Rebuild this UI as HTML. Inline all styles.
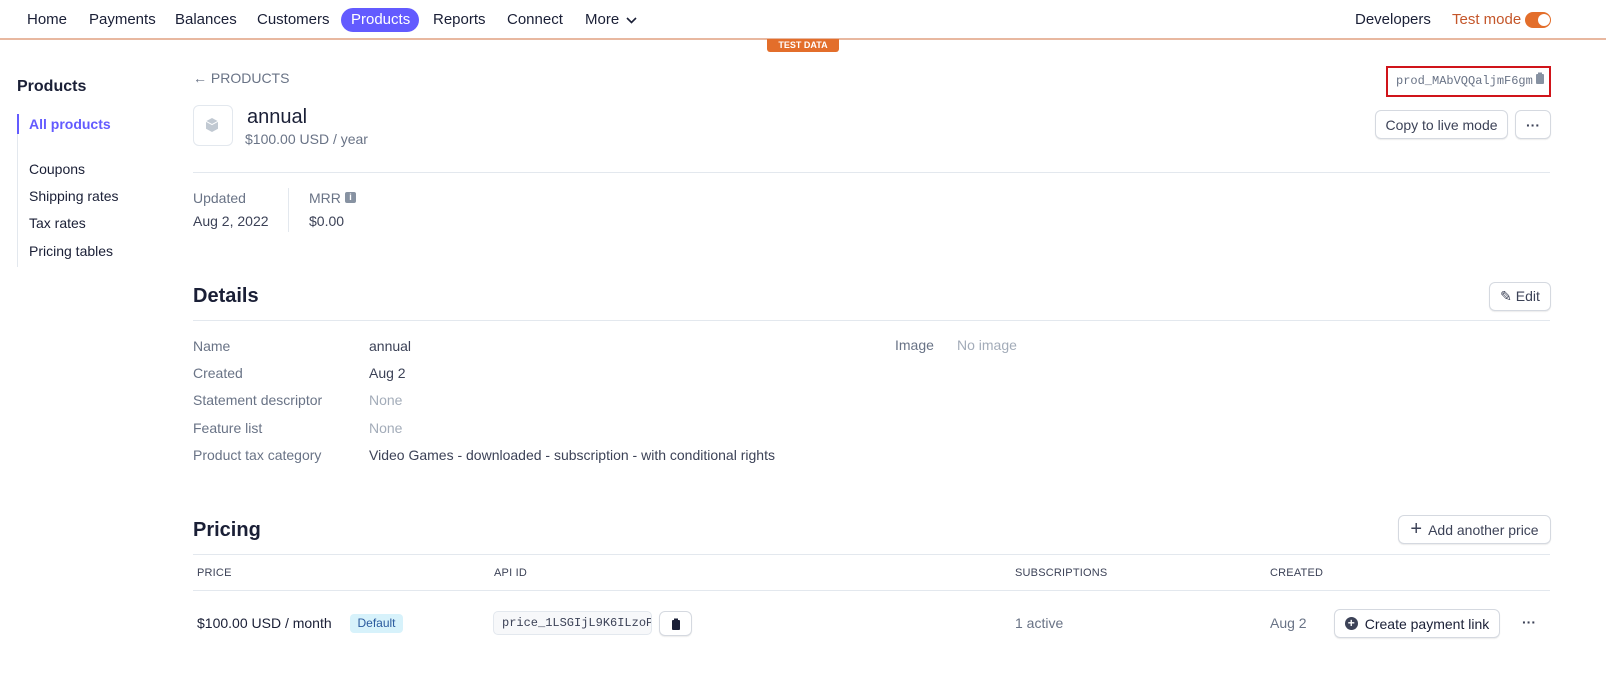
<!DOCTYPE html>
<html><head><meta charset="utf-8"><style>
*{margin:0;padding:0;box-sizing:border-box}
body{width:1606px;height:684px;overflow:hidden;background:#fff;font-family:"Liberation Sans",sans-serif;color:#1a1f36;font-size:14px;position:relative}
.a{position:absolute;white-space:nowrap}
.nav{font-size:15px;color:#1a1f36;top:11px}
.g{color:#697386}
.l{color:#a3acb9}
.btn{position:absolute;border:1px solid #d5d9e0;border-radius:6px;background:#fff;box-shadow:0 1px 1px rgba(0,0,0,.08);font-size:14px;display:flex;align-items:center;justify-content:center;color:#3c4257}
.hr{position:absolute;height:1px;background:#e3e8ee}
.mono{font-family:"Liberation Mono",monospace}
.th{font-size:11px;color:#3c4257;top:567px;letter-spacing:.2px}
</style></head><body>
<div class="a nav" style="left:27px">Home</div>
<div class="a nav" style="left:89px">Payments</div>
<div class="a nav" style="left:175px">Balances</div>
<div class="a nav" style="left:257px">Customers</div>
<div class="a" style="left:341px;top:8px;width:78px;height:24px;border-radius:12px;background:#635bff"></div>
<div class="a nav" style="left:351px;color:#fff">Products</div>
<div class="a nav" style="left:433px">Reports</div>
<div class="a nav" style="left:507px">Connect</div>
<div class="a nav" style="left:585px">More</div>
<svg class="a" style="left:625px;top:15px" width="13" height="10"><path d="M2 3l4.5 4.5L11 3" stroke="#1a1f36" stroke-width="1.6" fill="none"/></svg>
<div class="a nav" style="left:1355px">Developers</div>
<div class="a nav" style="left:1452px;color:#c4562a">Test mode</div>
<div class="a" style="left:1525px;top:12px;width:26px;height:16px;border-radius:8px;background:#e36e2b"></div>
<div class="a" style="left:1538px;top:14px;width:12px;height:12px;border-radius:6px;background:#fff"></div>
<div class="a" style="left:0;top:38px;width:1606px;height:2px;background:#e8b8a0"></div>
<div class="a" style="left:767px;top:39px;width:72px;height:13px;background:#e36e2b;border-radius:0 0 3px 3px;color:#fff;font-size:9px;font-weight:bold;text-align:center;line-height:13px">TEST DATA</div>

<div class="a" style="left:17px;top:78px;font-size:16px;font-weight:bold">Products</div>
<div class="a" style="left:17px;top:114px;width:1px;height:153px;background:#e3e8ee"></div>
<div class="a" style="left:17px;top:114px;width:2px;height:20px;background:#635bff"></div>
<div class="a" style="left:29px;top:116px;color:#635bff;font-weight:bold">All products</div>
<div class="a" style="left:29px;top:161px">Coupons</div>
<div class="a" style="left:29px;top:188px">Shipping rates</div>
<div class="a" style="left:29px;top:215px">Tax rates</div>
<div class="a" style="left:29px;top:243px">Pricing tables</div>

<div class="a g" style="left:193px;top:70px;font-size:14px">← PRODUCTS</div>
<div class="a" style="left:1386px;top:66px;width:165px;height:31px;border:2px solid #d0141a"></div>
<div class="a mono g" style="left:1396px;top:74px;font-size:12px">prod_MAbVQQaljmF6gm</div>
<svg class="a" style="left:1535px;top:72px" width="10" height="12"><rect x="1" y="2" width="8" height="10" rx="1" fill="#8792a2"/><rect x="3" y="0.5" width="4" height="3" fill="#8792a2"/></svg>
<div class="a" style="left:193px;top:105px;width:40px;height:41px;border:1px solid #e3e8ee;border-radius:6px"></div>
<svg class="a" style="left:205px;top:117px" width="14" height="16"><path d="M7 1l6 3.3v7.4L7 15l-6-3.3V4.3z" fill="#c1c9d2"/><path d="M1 4.3L7 7.6l6-3.3" stroke="#fff" fill="none"/></svg>
<div class="a" style="left:247px;top:106px;font-size:20px">annual</div>
<div class="a g" style="left:245px;top:131px">$100.00 USD / year</div>
<div class="btn" style="left:1375px;top:110px;width:133px;height:29px">Copy to live mode</div>
<div class="btn" style="left:1515px;top:110px;width:36px;height:29px;font-weight:bold">···</div>
<div class="hr" style="left:193px;top:172px;width:1357px"></div>
<div class="a g" style="left:193px;top:190px">Updated</div>
<div class="a" style="left:193px;top:213px;color:#3c4257">Aug 2, 2022</div>
<div class="a" style="left:288px;top:188px;width:1px;height:44px;background:#e3e8ee"></div>
<div class="a g" style="left:309px;top:190px">MRR</div>
<div class="a" style="left:345px;top:192px;width:11px;height:11px;border-radius:2px;background:#8792a2;color:#fff;font-size:9px;text-align:center;line-height:11px;font-weight:bold">i</div>
<div class="a" style="left:309px;top:213px;color:#3c4257">$0.00</div>

<div class="a" style="left:193px;top:285px;font-size:20px;font-weight:bold">Details</div>
<div class="btn" style="left:1489px;top:282px;width:62px;height:29px">✎&nbsp;Edit</div>
<div class="hr" style="left:193px;top:320px;width:1357px"></div>
<div class="a g" style="left:193px;top:338px">Name</div><div class="a" style="left:369px;top:338px;color:#3c4257">annual</div>
<div class="a g" style="left:193px;top:365px">Created</div><div class="a" style="left:369px;top:365px;color:#3c4257">Aug 2</div>
<div class="a g" style="left:193px;top:392px">Statement descriptor</div><div class="a l" style="left:369px;top:392px">None</div>
<div class="a g" style="left:193px;top:420px">Feature list</div><div class="a l" style="left:369px;top:420px">None</div>
<div class="a g" style="left:193px;top:447px">Product tax category</div><div class="a" style="left:369px;top:447px;color:#3c4257">Video Games - downloaded - subscription - with conditional rights</div>
<div class="a g" style="left:895px;top:337px">Image</div><div class="a l" style="left:957px;top:337px">No image</div>

<div class="a" style="left:193px;top:519px;font-size:20px;font-weight:bold">Pricing</div>
<div class="btn" style="left:1398px;top:515px;width:153px;height:29px"><span style="font-size:20px;margin-right:6px;font-weight:300">+</span>Add another price</div>
<div class="hr" style="left:193px;top:554px;width:1357px"></div>
<div class="a th" style="left:197px">PRICE</div>
<div class="a th" style="left:494px">API ID</div>
<div class="a th" style="left:1015px">SUBSCRIPTIONS</div>
<div class="a th" style="left:1270px">CREATED</div>
<div class="hr" style="left:193px;top:590px;width:1357px"></div>
<div class="a" style="left:197px;top:615px">$100.00 USD / month</div>
<div class="a" style="left:350px;top:614px;width:53px;height:19px;background:#d7f2fb;border-radius:4px;color:#2a5a9e;font-size:12px;text-align:center;line-height:19px">Default</div>
<div class="a" style="left:493px;top:611px;width:159px;height:24px;border:1px solid #e3e8ee;border-radius:5px;background:#f7f8fa;overflow:hidden"><span class="mono" style="font-size:12px;color:#3c4257;position:absolute;left:8px;top:4px">price_1LSGIjL9K6ILzoP</span></div>
<div class="btn" style="left:659px;top:611px;width:33px;height:25px"><svg width="10" height="12"><rect x="1" y="2" width="8" height="10" rx="1" fill="#1a1f36"/><rect x="3" y="0.5" width="4" height="3" fill="#1a1f36"/></svg></div>
<div class="a g" style="left:1015px;top:615px">1 active</div>
<div class="a g" style="left:1270px;top:615px">Aug 2</div>
<div class="btn" style="left:1334px;top:609px;width:166px;height:29px;color:#1a1f36"><span style="display:inline-block;width:13px;height:13px;border-radius:50%;background:#3c4257;color:#fff;font-size:12px;line-height:13px;text-align:center;margin-right:7px;font-weight:bold">+</span>Create payment link</div>
<div class="a" style="left:1522px;top:614px;font-weight:bold;color:#3c4257">···</div>
</body></html>
